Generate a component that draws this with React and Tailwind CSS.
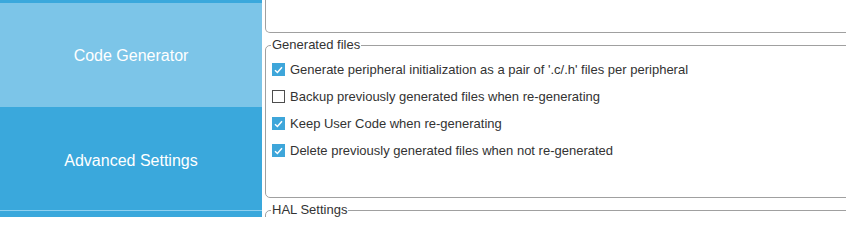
import React, { useState } from 'react';

const options = [
  { id: 'pair', label: "Generate peripheral initialization as a pair of '.c/.h' files per peripheral", checked: true },
  { id: 'backup', label: 'Backup previously generated files when re-generating', checked: false },
  { id: 'keep', label: 'Keep User Code when re-generating', checked: true },
  { id: 'delete', label: 'Delete previously generated files when not re-generated', checked: true },
];

const CheckRow = ({ label, checked, onToggle }) => (
  <label className="flex items-center h-[27px] cursor-pointer" onClick={onToggle}>
    <span
      className={
        checked
          ? 'w-[13px] h-[13px] shrink-0 flex items-center justify-center bg-[#3ea6da] border border-[#3ea6da]'
          : 'w-[13px] h-[13px] shrink-0 border border-[#4d4d4d] bg-white'
      }
    >
      {checked && (
        <svg width="9" height="8" viewBox="0 0 9 8" fill="none">
          <path d="M1 4.2 L3.4 6.5 L8 1.2" stroke="white" strokeWidth="1.5" />
        </svg>
      )}
    </span>
    <span className="ml-[5px] text-[13px] leading-[15px] text-[#333333] whitespace-nowrap">{label}</span>
  </label>
);

const App = () => {
  const [values, setValues] = useState(options.map((o) => o.checked));

  const toggle = (i) => {
    setValues((v) => v.map((x, j) => (j === i ? !x : x)));
  };

  return (
    <div
      className="flex w-[846px] h-[217px] overflow-hidden bg-white"
      style={{ fontFamily: '"Liberation Sans", Arial, sans-serif' }}
    >
      {/* sidebar */}
      <div className="w-[262px] shrink-0 flex flex-col bg-[#3aa8dc]">
        <div className="h-[3px] bg-[#3aa8dc]" />
        <div className="h-[104px] bg-[#7cc5e8] flex items-center justify-center text-white text-[16px] pt-[1px]">
          Code Generator
        </div>
        <div className="h-[103px] flex items-center justify-center text-white text-[16px] pt-[5px]">
          Advanced Settings
        </div>
        <div className="h-[1px] bg-[#8ed0f0]" />
        <div className="flex-1" />
      </div>

      {/* content */}
      <div className="flex-1 min-w-0 pl-[3px] mr-[-20px]">
        <div className="h-[33px] border-l border-r border-b border-[#a0a0a0] rounded-b-[5px]" />

        <fieldset className="mt-[5px] h-[160px] border border-[#a0a0a0] rounded-[5px] pl-[6px]">
          <legend className="ml-[-1px] px-[1px] text-[13px] leading-[14px] text-[#333333]">Generated files</legend>
          <div className="flex flex-col pt-[4px]">
            {options.map((o, i) => (
              <CheckRow key={o.id} label={o.label} checked={values[i]} onToggle={() => toggle(i)} />
            ))}
          </div>
        </fieldset>

        <fieldset className="mt-[5px] h-[60px] border border-[#a0a0a0] rounded-[5px] pl-[6px]">
          <legend className="ml-[-1px] px-[1px] text-[13px] leading-[14px] text-[#333333]">HAL Settings</legend>
        </fieldset>
      </div>
    </div>
  );
};

export default App;
